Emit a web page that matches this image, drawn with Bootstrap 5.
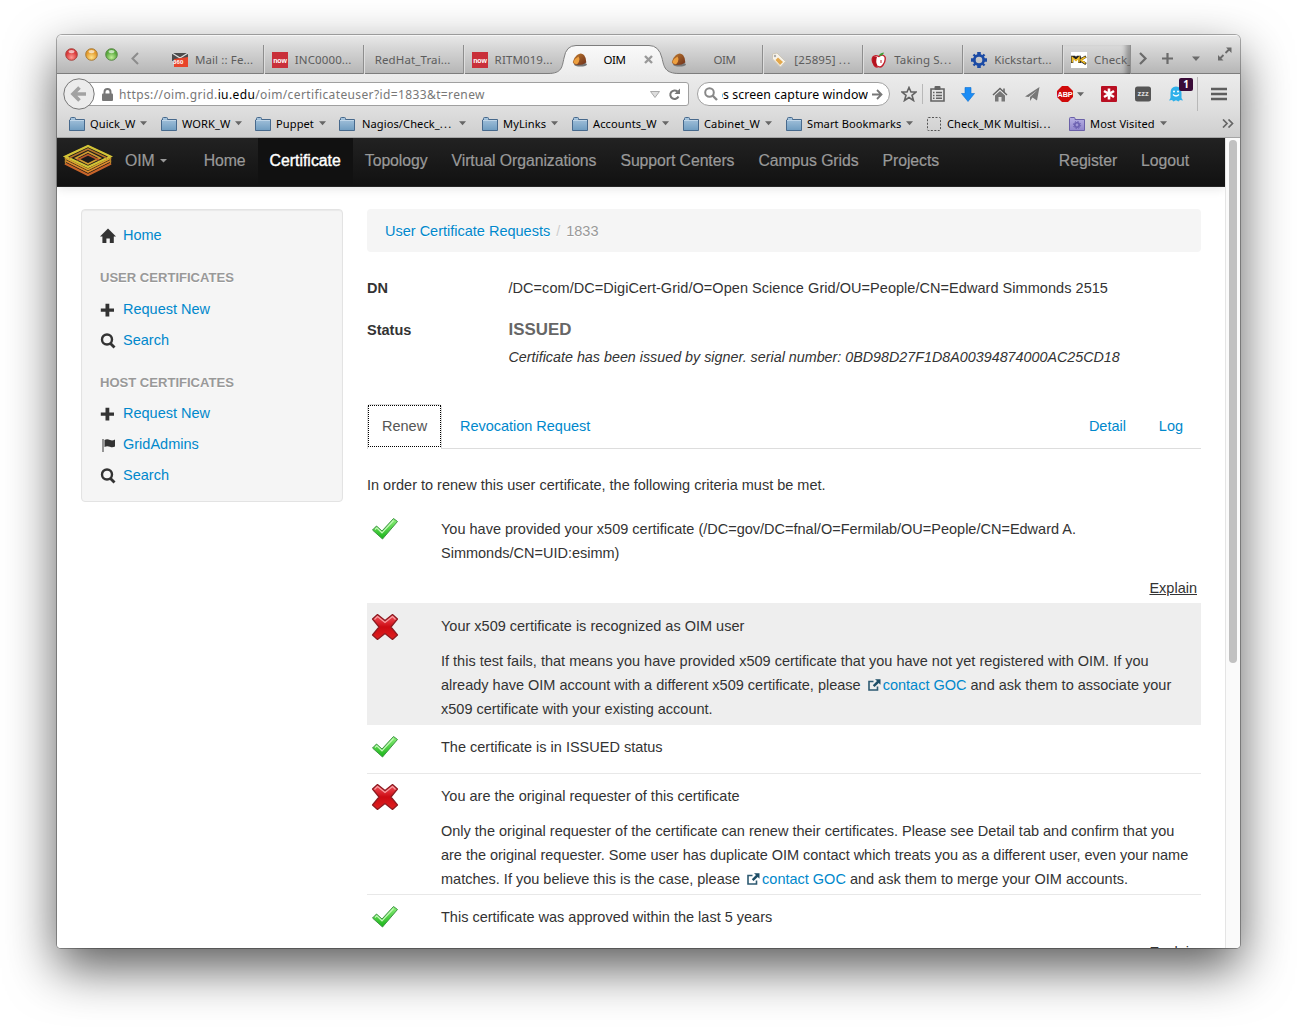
<!DOCTYPE html>
<html lang="en">
<head>
<meta charset="utf-8">
<title>OIM</title>
<link href="https://cdn.jsdelivr.net/npm/bootstrap@5.3.0/dist/css/bootstrap.min.css" rel="stylesheet">
<script src="https://cdn.jsdelivr.net/npm/bootstrap@5.3.0/dist/js/bootstrap.bundle.min.js"></script>
<style>
html,body{height:1027px;overflow:hidden;background:#fff}
body{font-family:"Liberation Sans",Arial,sans-serif;font-size:14.5px;line-height:24px;color:#333}
a{text-decoration:none;color:#08c}
svg{display:block;flex:none}
.win{width:1183px;height:913px;margin:35px 0 0 57px;border-radius:5px 5px 4px 4px;background:#fff;box-shadow:0 0 0 1px rgba(0,0,0,.3),0 20px 50px rgba(0,0,0,.65)}
.win-in{border-radius:5px 5px 4px 4px}

/* browser chrome */
.chrome{font-family:"Noto Sans","Open Sans",sans-serif;line-height:16px;color:#000}
.el{letter-spacing:1.2px}
.tabbar{height:39px;background:linear-gradient(#e9e9e9,#d6d6d6 35%,#b6b6b6);border-bottom:1px solid #7d7d7d;box-shadow:inset 0 1px #f6f6f6;font-size:11.5px;letter-spacing:.12px}
.lights{width:107px;padding:13px 0 0 8px;gap:7px}
.ftab{width:100px;height:29px;margin-top:10px;padding:0 0 0 8px;gap:7px;color:#5c5c5c;border-right:1px solid #8e8e8e;box-shadow:1px 0 #dedede}
.ftab.plain{padding-left:11px}
.ftab.noline{border-color:transparent;box-shadow:none}
.ftab.cur{color:#000;padding-left:8px}
.ftab.tight{width:68px;border-color:#8e8e8e;box-shadow:inset -7px 0 5px -3px rgba(0,0,0,.3)}
.oimname{width:60px;letter-spacing:-.5px}
.cur .oimname{width:42px;padding-left:9px}
.active-shape{left:491px;top:10px}
.toolbar{height:36px;background:linear-gradient(#ececec,#dedede)}
.back{width:32px;height:32px;margin-left:6px;z-index:1}
.urlbox{width:610px;height:24px;margin-left:-16px;padding:0 7px 0 22px;background:#fff;border:1px solid #a0a0a0;border-radius:0 3px 3px 0;font-size:12px;letter-spacing:.38px;color:#777}
.urlbox span{margin-left:6px;margin-top:1px}
.urlbox b{font-weight:400;color:#000}
.searchbox{width:193px;height:24px;margin-left:8px;padding:0 6px;border:1px solid #a0a0a0;border-radius:12px;background:#fff;font-size:12.3px;letter-spacing:.1px}
.searchbox span{width:146px;direction:rtl;height:15px}
.tools{display:grid;grid-template-columns:26px 1px 28px 34px 30px 35px 41px 36px 32px 34px 5px 42px;margin-left:6px;justify-items:center;align-items:center;height:36px}
.vline{width:1px;height:20px;background:#b8b8b8}
.vline.tall{height:34px;justify-self:end}
.count{left:10px;top:-8px;width:14px;height:13px;background:#3a0b38;color:#fff;border-radius:2px;font-weight:700;font-size:10px;line-height:13px;text-align:center}
.bmarks{height:28px;background:linear-gradient(#dedede,#cecece);border-bottom:1px solid #a5a5a5;display:grid;grid-template-columns:92px 94px 84px 143px 90px 111px 103px 140px 143px 153px auto;padding-left:12px;font-size:11.1px;letter-spacing:.08px;align-items:center}
.bmarks>div{display:flex;align-items:center;white-space:nowrap;gap:5px}
.bmarks .nag{gap:7px}

/* page */
.page-area{height:810px}
.topnav{height:49px;background:linear-gradient(#222,#111);border-bottom:1px solid #252525;box-shadow:0 1px 10px rgba(0,0,0,.12);font-size:15.8px}
.topnav a{color:#999;height:48px;line-height:45px;padding:0 12px;white-space:nowrap;letter-spacing:-.07px;-webkit-text-stroke:.2px #999}
.topnav a.on{color:#fff;background:#111;letter-spacing:.02px;-webkit-text-stroke:.4px #fff}
.topnav .nav-home{margin-left:11px}
.sidewell{width:262px;height:293px;margin:22px 0 0 24px;padding:9px 18px;background:#f5f5f5;border:1px solid #e3e3e3;border-radius:4px;box-shadow:inset 0 1px 1px rgba(0,0,0,.05)}
.sidewell a{display:flex;align-items:center;height:31px;gap:7px}
.sidewell a svg{margin-top:2px}
.sidewell h6{font-size:13.05px;line-height:24px;font-weight:700;color:#999;text-shadow:0 1px 0 #fff;margin:0;padding:15.5px 0 3px;height:43px}
.sidewell h6.host{height:42px}
.mainc{width:834px;margin:22px 0 0 24px}
.crumbs{height:43px;background:#f5f5f5;border-radius:4px;padding:0 18px;text-shadow:0 1px 0 #fff}
.crumbs .cs{padding:0 6px;color:#ccc}
.crumbs .cn{color:#999}
.lab{width:141.5px;font-weight:700}
.dn{letter-spacing:.045px}
.status-row{margin-top:14px}
.issued{font-size:16.9px;font-weight:700;color:#666}
.stat-note{font-size:14.32px;padding-top:3px}
.tabs2{height:45px;margin-top:35px;border-bottom:1px solid #ddd}
.tabs2 a{line-height:44px;letter-spacing:-.02px}
.tabs2 .tab-cur{width:75px;height:45px;background:#fff;border:1px solid #ddd;border-bottom:0;border-radius:4px 4px 0 0;color:#555}
.tab-cur span{width:73px;height:42px;border:1px dotted #000;padding-left:13px;line-height:40px}
.tab-rev{padding-left:18px}
.tab-det{margin-right:33px}
.tab-log{margin-right:18px}
.intro{margin:24px 0 9px}
.crit{height:121px;padding-top:10px}
.crit.first{height:97px;padding-top:11px}
.crit.brief{height:49px}
.crit.shade{height:122px;padding-top:11px}
.crit p{margin:0 0 11px}
.crit .ic{width:74px;padding-left:4px}
.crit .ic .bad{margin-top:-1px}
.crit .tx{width:760px}
.explain{color:#333;text-decoration:underline;margin-right:4px}
.shade{background:#eee}
.rule{border-bottom:1px solid #e8e8e8}
.tx .l2{letter-spacing:-.025px}
.track{width:15px;background:#fafafa;border-left:1px solid #e4e4e4;padding:2px 0 0 3px}
.thumb{width:8px;height:523px;border-radius:4px;background:#c1c1c1}
.ext{display:inline-block;margin:0 2px 0 3px;vertical-align:-1px}
</style>
</head>
<body>
<svg width="0" height="0" class="position-absolute">
<defs>
<linearGradient id="gf" x2="0" y2="1"><stop stop-color="#a9c6de"/><stop offset="1" stop-color="#6f9cc0"/></linearGradient>
<linearGradient id="gp" x2="0" y2="1"><stop stop-color="#b9b2e4"/><stop offset="1" stop-color="#8f84cc"/></linearGradient>
<linearGradient id="gc" x2="0" y2="1"><stop stop-color="#8df07a"/><stop offset="1" stop-color="#17b417"/></linearGradient>
<linearGradient id="gx" x2="0" y2="1"><stop stop-color="#f4555f"/><stop offset=".5" stop-color="#cc0a12"/><stop offset="1" stop-color="#e02020"/></linearGradient>
<linearGradient id="gd" x2="1" y2="1"><stop stop-color="#c07c30"/><stop offset="1" stop-color="#6e2f1a"/></linearGradient>
<linearGradient id="gt" x2="0" y2="1"><stop stop-color="#fafafa"/><stop offset="1" stop-color="#ececec"/></linearGradient>
<radialGradient id="lr" cy=".75"><stop stop-color="#ff9a92"/><stop offset="1" stop-color="#d8383a"/></radialGradient>
<radialGradient id="ly" cy=".75"><stop stop-color="#ffe28a"/><stop offset="1" stop-color="#e39a2c"/></radialGradient>
<radialGradient id="lg" cy=".75"><stop stop-color="#c2ee98"/><stop offset="1" stop-color="#58a83c"/></radialGradient>
<symbol id="folder" viewBox="0 0 16 14"><path d="M1.500 3V1.500q0-1 1-1h3q1 0 1 1V2.500H15.500V13.500H.500V3z" fill="url(#gf)" stroke="#47698c"/><path d="M1 3.500H15" stroke="#c0d6e8"/></symbol>
<symbol id="crt" viewBox="0 0 8 5"><path d="M0 0H8L4 4.500z" fill="#666"/></symbol>
<symbol id="rock" viewBox="0 0 16 15"><ellipse cx="8.500" cy="12.500" rx="6.500" ry="2" fill="#777"/><path d="M.8 10Q1.500 6 5 3Q9 0 12 3Q14.500 6 14.300 10.500Q10 13.500 5.500 13Q1.500 12.500 .8 10z" fill="url(#gd)"/><path d="M1.300 10Q2.500 6.500 6.500 4.500Q8 6.500 7 9.500Q6 12 4.500 12.200Q2 12 1.300 10z" fill="#eda040"/></symbol>
<symbol id="plus" viewBox="0 0 16 16"><path d="M.8 6.500H5.500V1.800H9.300V6.500H14V9.800H9.300V14.500H5.500V9.800H.8z" fill="#333"/></symbol>
<symbol id="mag" viewBox="0 0 16 16"><circle cx="7" cy="6.500" r="5" fill="none" stroke="#333" stroke-width="2.400"/><path d="M10.500 10.500L14.500 14.500" stroke="#333" stroke-width="2.800"/></symbol>
<symbol id="ok" viewBox="0 0 28 24"><path d="M1.500 13L5.500 9L11 14L22.500 1.500L26.500 4.500L11.500 22z" fill="url(#gc)" stroke="#3f9444" stroke-width="1" stroke-linejoin="round"/><path d="M4 12.500L5.800 10.800L11 15.800L22.500 3.500" fill="none" stroke="#c4f8b8" stroke-width="1.200"/></symbol>
<symbol id="no" viewBox="0 0 28 28"><path d="M1.500 6L6.500 1.500L14 7.500L21.500 1.500L26.500 6L20 14L26.500 22L21.500 26.500L14 20.500L6.500 26.500L1.500 22L8 14z" fill="url(#gx)" stroke="#8b1a20" stroke-width="1.200" stroke-linejoin="round"/><path d="M3.500 6.500L6.500 3.500L14 9.500L21.500 3.500L24.500 6.500" fill="none" stroke="#f7a0a4" stroke-width="1.100"/></symbol>
<symbol id="ext" viewBox="0 0 13 12"><path d="M5.500 2.500H1V11H9.500V7.500" fill="none" stroke="#2d5a72" stroke-width="1.600"/><path d="M7 .2H12.500V5.700L10.700 3.900L6.500 8L4.800 6.300L9 2.100z" fill="#1d4d66"/></symbol>
<symbol id="now" viewBox="0 0 16 16"><path d="M0 0H16V16H0z" fill="#c9303a"/><text x="8" y="10.500" text-anchor="middle" font-family="Liberation Sans" font-weight="700" font-size="7" letter-spacing="-.2" fill="#fff">now</text></symbol>
</defs>
</svg>

<div class="win"><div class="win-in overflow-hidden h-100">
<div class="chrome">
  <div class="tabbar d-flex position-relative text-nowrap">
    <svg class="active-shape position-absolute" width="132" height="30" viewBox="0 0 132 30"><path d="M0 28.500C14 28.500 14 22 16 13Q18 .5 28 .5H101Q111 .5 114 13C116 22 117 28.500 131 28.500V30H0z" fill="url(#gt)"/><path d="M0 28.500C14 28.500 14 22 16 13Q18 .5 28 .5H101Q111 .5 114 13C116 22 117 28.500 131 28.500" fill="none" stroke="#7d7d7d"/></svg>
    <div class="lights d-flex">
      <svg width="13" height="13"><circle cx="6.500" cy="6.500" r="5.800" fill="url(#lr)" stroke="#a8443f"/><ellipse cx="6.500" cy="3.600" rx="3" ry="1.700" fill="#fff" opacity=".65"/></svg>
      <svg width="13" height="13"><circle cx="6.500" cy="6.500" r="5.800" fill="url(#ly)" stroke="#a87a35"/><ellipse cx="6.500" cy="3.600" rx="3" ry="1.700" fill="#fff" opacity=".65"/></svg>
      <svg width="13" height="13"><circle cx="6.500" cy="6.500" r="5.800" fill="url(#lg)" stroke="#5a8848"/><ellipse cx="6.500" cy="3.600" rx="3" ry="1.700" fill="#fff" opacity=".65"/></svg>
      <svg class="ms-1 mt-1" width="12" height="14"><path d="M9 1L3.500 6.500L9 12" fill="none" stroke="#8c8c8c" stroke-width="2"/></svg>
    </div>
    <div class="ftab d-flex align-items-center"><svg width="16" height="16"><path d="M0 1H16V9H0z" fill="#4d4d4d"/><path d="M0 1L8 6L16 1" fill="none" stroke="#ddd" stroke-width="1.300"/><path d="M2 7L16 5V15H2z" fill="#e8452c"/><text x="1" y="11.500" font-family="Liberation Sans" font-weight="700" font-size="6" fill="#fff">360</text></svg><span>Mail :: Fe...</span></div>
    <div class="ftab d-flex align-items-center"><svg width="16" height="16"><use href="#now"/></svg><span>INC0000...</span></div>
    <div class="ftab plain d-flex align-items-center"><span>RedHat_Trai...</span></div>
    <div class="ftab noline d-flex align-items-center"><svg width="16" height="16"><use href="#now"/></svg><span>RITM019...</span></div>
    <div class="ftab noline cur position-relative d-flex align-items-center"><svg width="16" height="15"><use href="#rock"/></svg><span class="oimname">OIM</span><svg width="9" height="9"><path d="M1 1L8 8M8 1L1 8" stroke="#999" stroke-width="2.400"/></svg></div>
    <div class="ftab d-flex align-items-center"><svg width="16" height="15"><use href="#rock"/></svg><span class="oimname text-center">OIM</span></div>
    <div class="ftab d-flex align-items-center"><svg width="16" height="16"><path d="M1.500 2L6 1L14.500 9.500L9.500 15L1.500 7z" fill="#f7f3ea" stroke="#cfc8b8"/><path d="M7 5.500L12 10L9 13L4.500 8z" fill="#e3a84c"/><circle cx="4" cy="4" r="1.200" fill="#aaa"/></svg><span>[25895] <span class="el">...</span></span></div>
    <div class="ftab d-flex align-items-center"><svg width="16" height="16"><path d="M8 4.500Q12 1.500 14 5Q15 9 12 13Q10 16 7.500 14.500Q5 16 3 13Q0 8 2 5Q4 2.500 8 4.500z" fill="#fff" stroke="#c3202c" stroke-width="1.400"/><path d="M1.500 6Q3 3 6 5Q4 10 7 14.500Q3 15 1.500 10z" fill="#b5121e"/><path d="M8 4Q8 1 13 .5Q12 4 8 4z" fill="#3c9c34"/><path d="M10 8V11" stroke="#c3202c"/></svg><span>Taking S<span class="el">...</span></span></div>
    <div class="ftab d-flex align-items-center"><svg width="16" height="16" fill="none" stroke="#1c4ba5"><circle cx="8" cy="8" r="4.700" stroke-width="2.800"/><path d="M8 0V4M8 12V16M0 8H4M12 8H16" stroke-width="3.600"/><path d="M2.500 2.500L4.500 4.500M13.500 2.500L11.500 4.500M2.500 13.500L4.500 11.500M13.500 13.500L11.500 11.500" stroke-width="2.400"/></svg><span>Kickstart...</span></div>
    <div class="ftab tight overflow-hidden d-flex align-items-center"><svg width="16" height="16"><path d="M0 0H16V16H0z" fill="#fff"/><path d="M1 11V5H3.500L5 7L6.500 5H8.500V11M9 8L15 4.500M9 8L15 12M9 5.500V10.500" fill="none" stroke="#222" stroke-width="2.600"/><path d="M1.300 10.500V5.500L5 8.500L8 5.500V10.500M9.500 8L14.500 5M9.500 8L14.500 11.300" fill="none" stroke="#f2bc22" stroke-width="1.500"/></svg><span>Check_</span></div>
    <div class="d-flex align-items-center flex-grow-1 pt-2">
      <svg width="109" height="30" viewBox="0 0 109 30" fill="none" stroke="#6b6b6b"><path d="M9 10L14.500 15.500L9 21" stroke-width="2.200"/><path d="M31 15.500H42M36.500 10V21" stroke-width="2.200"/><path d="M61 13.500H69L65 18z" fill="#6b6b6b" stroke="none"/><path d="M94.500 10L98.500 6M92.500 12L88.500 16" stroke-width="1.800"/><path d="M95 4.500H100.500V10zM87 12V17.500H92.500z" fill="#6b6b6b" stroke="none"/></svg>
    </div>
  </div>

  <div class="toolbar d-flex align-items-center">
    <svg class="back position-relative mt-1" viewBox="0 0 32 32"><circle cx="16" cy="16" r="15.200" fill="#ececec" stroke="#777"/><path d="M23 16H11M16.500 9.500L10 16L16.500 22.500" fill="none" stroke="#a2a2a2" stroke-width="3.600"/></svg>
    <div class="urlbox d-flex align-items-center mt-1 text-nowrap">
      <svg width="11" height="13"><path d="M2.500 6V4Q2.500 1 5.500 1Q8.500 1 8.500 4V6" fill="none" stroke="#777" stroke-width="2"/><rect y="5.500" width="11" height="7.500" rx="1" fill="#777"/></svg>
      <span>https://oim.grid.<b>iu.edu</b>/oim/certificateuser?id=1833&amp;t=renew</span>
      <svg class="ms-auto" width="10" height="7"><path d="M.5 .5H9.500L5 6.500z" fill="#ddd" stroke="#aaa"/></svg>
      <svg class="ms-2" width="13" height="13"><path d="M10.500 8.500A4.300 4.300 0 1 1 9.500 3.500" fill="none" stroke="#777" stroke-width="2"/><path d="M12 .5V6H6.500z" fill="#777"/></svg>
    </div>
    <div class="searchbox d-flex align-items-center mt-1 text-nowrap">
      <svg width="14" height="14"><circle cx="5.500" cy="5.500" r="4.300" fill="none" stroke="#888" stroke-width="2"/><path d="M8.500 8.500L13 13" stroke="#888" stroke-width="2.400"/></svg>
      <span class="overflow-hidden ms-1 ps-1">os screen capture window</span>
      <svg class="ms-1" width="11" height="11"><path d="M0 5.500H9M5 1L9.500 5.500L5 10" fill="none" stroke="#777" stroke-width="1.800"/></svg>
    </div>
    <div class="tools mt-1">
      <svg width="16" height="16"><path d="M8 1.500L10 6H15L11 9.300L12.500 14.500L8 11.500L3.500 14.500L5 9.300L1 6H6z" fill="none" stroke="#636363" stroke-width="1.600"/></svg>
      <div class="vline"></div>
      <svg width="15" height="16"><path d="M1 3H14V15H1z" fill="none" stroke="#636363" stroke-width="1.600"/><rect x="4.500" width="6" height="4" rx="1" fill="#636363"/><path d="M3 6.500H4.500M6 6.500H12M3 9.500H4.500M6 9.500H12M3 12.300H4.500M6 12.300H12" stroke="#636363" stroke-width="1.400"/></svg>
      <svg width="14" height="15"><path d="M4 .5H10V6.500H13.500L7 14.500L.5 6.500H4z" fill="#1a8cf5" stroke="#0c6fd0" stroke-width=".6"/></svg>
      <svg width="16" height="15"><path d="M1 8L8 1.500L15 8" fill="none" stroke="#636363" stroke-width="1.500"/><path d="M3 8.500L8 4L13 8.500V14.500H9.500V10H6.500V14.500H3z" fill="#777"/><path d="M12 1.500V5" stroke="#636363" stroke-width="1.500"/></svg>
      <svg width="15" height="15"><path d="M0 9.500L14.500 0L12 13.500L7.500 10.500L5 14V10L12.500 3L3.500 10z" fill="#777"/></svg>
      <div class="d-flex align-items-center gap-1"><svg width="16" height="16"><path d="M5 0H11L16 5V11L11 16H5L0 11V5z" fill="#d00a0a"/><text x="8" y="10.700" text-anchor="middle" font-family="Liberation Sans" font-weight="700" font-size="7.300" letter-spacing="-.2" fill="#fff">ABP</text></svg><svg width="7" height="5"><use href="#crt"/></svg></div>
      <svg width="16" height="16"><rect width="16" height="16" rx="1" fill="#b90f22"/><path d="M8 2.500V13.500M3 5L13 11M13 5L3 11" stroke="#fff" stroke-width="2.600"/></svg>
      <svg width="16" height="16"><rect y=".5" width="16" height="15" rx="2.500" fill="#555"/><text x="8" y="10" text-anchor="middle" font-family="Liberation Sans" font-weight="700" font-size="7.500" fill="#ddd">zzz</text></svg>
      <div class="position-relative"><svg width="14" height="16"><path d="M1.500 7Q1.500 .5 7 .5Q12.500 .5 12.500 7V12L14 14.500L11 14L9.500 15.500L7 14.300L4.500 15.500L3 14L0 14.500L1.500 12z" fill="#2fb1ea"/><circle cx="5" cy="5.500" r="1" fill="#fff"/><circle cx="9" cy="5.500" r="1" fill="#fff"/><path d="M4 8.500Q7 11.500 10 8.500" fill="none" stroke="#fff" stroke-width="1.200"/></svg><div class="count position-absolute">1</div></div>
      <div class="vline tall"></div>
      <svg width="16" height="14"><path d="M0 2H16M0 7H16M0 12H16" stroke="#5e5e5e" stroke-width="2.400"/></svg>
    </div>
  </div>

  <div class="bmarks">
    <div><svg width="16" height="14"><use href="#folder"/></svg>Quick_W<svg width="7" height="5"><use href="#crt"/></svg></div>
    <div><svg width="16" height="14"><use href="#folder"/></svg>WORK_W<svg width="7" height="5"><use href="#crt"/></svg></div>
    <div><svg width="16" height="14"><use href="#folder"/></svg>Puppet<svg width="7" height="5"><use href="#crt"/></svg></div>
    <div class="nag"><svg width="16" height="14"><use href="#folder"/></svg><span>Nagios/Check_<span class="el">...</span></span><svg width="7" height="5"><use href="#crt"/></svg></div>
    <div><svg width="16" height="14"><use href="#folder"/></svg>MyLinks<svg width="7" height="5"><use href="#crt"/></svg></div>
    <div><svg width="16" height="14"><use href="#folder"/></svg>Accounts_W<svg width="7" height="5"><use href="#crt"/></svg></div>
    <div><svg width="16" height="14"><use href="#folder"/></svg>Cabinet_W<svg width="7" height="5"><use href="#crt"/></svg></div>
    <div><svg width="16" height="14"><use href="#folder"/></svg>Smart Bookmarks<svg width="7" height="5"><use href="#crt"/></svg></div>
    <div><svg width="16" height="14"><rect x="1.500" y=".5" width="13" height="13" rx="1" fill="none" stroke="#555" stroke-dasharray="2 1.500"/></svg><span>Check_MK Multisi<span class="el">...</span></span></div>
    <div><svg width="16" height="14"><path d="M.5 3V1.500Q.5.5 1.500.5H5Q6 .5 6 1.500V2.500H15.500V13.500H.5z" fill="url(#gp)" stroke="#6a60a8"/><circle cx="8" cy="8" r="2.200" fill="none" stroke="#6a5fb0" stroke-width="1.600"/><circle cx="8" cy="8" r="3.600" fill="none" stroke="#6a5fb0" stroke-dasharray="1.400 1.430"/></svg>Most Visited<svg width="7" height="5"><use href="#crt"/></svg></div>
    <div><svg width="12" height="9"><path d="M1 .5L5 4.500L1 8.500M6.500 .5L10.500 4.500L6.500 8.500" fill="none" stroke="#666" stroke-width="1.700"/></svg></div>
  </div>
</div>

<div class="page-area d-flex">
  <div class="flex-grow-1 overflow-hidden bg-white">
    <nav class="topnav d-flex">
      <svg class="ms-1 mt-1" width="52" height="40" viewBox="0 0 52 40" fill="none" stroke-width="1.900"><path d="M4 21.500L27 33L50 21.500" stroke="#c8642a" stroke-width="2.300"/><path d="M4 18.500L27 30L50 18.500" stroke="#dd8a2e"/><path d="M4 16L27 27.500L50 16" stroke="#d9a02e"/><path d="M4.500 21.500V14.500L27 4L49.500 14.500V21.500" stroke="#b8862a" stroke-width="1.300"/><path d="M4.500 14.500L27 4L49.500 14.500L27 25z" stroke="#d2c336" stroke-width="2.300"/><path d="M8 16L27 7L46 16" stroke="#b5752a" stroke-width="1.600"/><path d="M15 16L27 10L39 16L27 22z" stroke="#cf9a30" stroke-width="1.800"/><path d="M16 18L27 12.700L38 18" stroke="#b8562a" stroke-width="1.500"/></svg>
      <a class="ps-2 d-flex" href="#"><span class="ps-1">OIM</span><svg class="ms-1 mt-3 pt-1" width="10" height="10"><path d="M1 1H8L4.500 4.500z" fill="#999"/></svg></a>
      <a class="nav-home" href="#">Home</a><a class="on" href="#">Certificate</a><a href="#">Topology</a><a href="#">Virtual Organizations</a><a href="#">Support Centers</a><a href="#">Campus Grids</a><a href="#">Projects</a>
      <a class="ms-auto" href="#">Register</a><a class="me-4" href="#">Logout</a>
    </nav>
    <div class="d-flex">
      <aside class="sidewell">
        <a href="#"><svg width="16" height="16"><path d="M8 .5L16 8.500H13.800V15H9.800V10.500H6.400V15H2.400V8.500H0z" fill="#333"/></svg>Home</a>
        <h6>USER CERTIFICATES</h6>
        <a href="#"><svg width="16" height="16"><use href="#plus"/></svg>Request New</a>
        <a href="#"><svg width="16" height="16"><use href="#mag"/></svg>Search</a>
        <h6 class="host">HOST CERTIFICATES</h6>
        <a href="#"><svg width="16" height="16"><use href="#plus"/></svg>Request New</a>
        <a href="#"><svg width="16" height="16"><path d="M3 2V15" stroke="#555" stroke-width="1.200"/><path d="M4.500 3Q7 1.500 10 3Q12.500 4 15 2.500V9.500Q12.500 11 10 9.800Q7 8.500 4.500 10z" fill="#333"/></svg>GridAdmins</a>
        <a href="#"><svg width="16" height="16"><use href="#mag"/></svg>Search</a>
      </aside>
      <main class="mainc">
        <div class="crumbs d-flex align-items-center"><a href="#">User Certificate Requests</a><span class="cs">/</span><span class="cn">1833</span></div>
        <div class="d-flex mt-4"><div class="lab">DN</div><div class="dn">/DC=com/DC=DigiCert-Grid/O=Open Science Grid/OU=People/CN=Edward Simmonds 2515</div></div>
        <div class="status-row d-flex"><div class="lab pt-1">Status</div><div><div class="issued pt-1">ISSUED</div><div class="stat-note fst-italic">Certificate has been issued by signer. serial number: 0BD98D27F1D8A00394874000AC25CD18</div></div></div>
        <div class="tabs2 d-flex">
          <div class="tab-cur"><span class="d-block">Renew</span></div>
          <a class="tab-rev me-auto" href="#">Revocation Request</a><a class="tab-det" href="#">Detail</a><a class="tab-log" href="#">Log</a>
        </div>
        <p class="intro">In order to renew this user certificate, the following criteria must be met.</p>
        <div class="crit first d-flex"><div class="ic"><svg width="28" height="24"><use href="#ok"/></svg></div><div class="tx"><p>You have provided your x509 certificate (/DC=gov/DC=fnal/O=Fermilab/OU=People/CN=Edward A.<br>Simmonds/CN=UID:esimm)</p><div class="text-end"><a class="explain" href="#">Explain</a></div></div></div>
        <div class="crit shade d-flex"><div class="ic"><svg class="bad" width="28" height="28"><use href="#no"/></svg></div><div class="tx"><p>Your x509 certificate is recognized as OIM user</p><p>If this test fails, that means you have provided x509 certificate that you have not yet registered with OIM. If you<br>already have OIM account with a different x509 certificate, please <a href="#"><svg class="ext" width="13" height="12"><use href="#ext"/></svg>contact GOC</a> and ask them to associate your<br>x509 certificate with your existing account.</p></div></div>
        <div class="crit brief rule d-flex"><div class="ic"><svg width="28" height="24"><use href="#ok"/></svg></div><div class="tx"><p>The certificate is in ISSUED status</p></div></div>
        <div class="crit rule d-flex"><div class="ic"><svg class="bad" width="28" height="28"><use href="#no"/></svg></div><div class="tx"><p>You are the original requester of this certificate</p><p>Only the original requester of the certificate can renew their certificates. Please see Detail tab and confirm that you<br><span class="l2">are the original requester. Some user has duplicate OIM contact which treats you as a different user, even your name</span><br>matches. If you believe this is the case, please <a href="#"><svg class="ext" width="13" height="12"><use href="#ext"/></svg>contact GOC</a> and ask them to merge your OIM accounts.</p></div></div>
        <div class="crit d-flex"><div class="ic"><svg width="28" height="24"><use href="#ok"/></svg></div><div class="tx"><p>This certificate was approved within the last 5 years</p><div class="text-end"><a class="explain" href="#">Explain</a></div></div></div>
      </main>
    </div>
  </div>
  <div class="track"><div class="thumb"></div></div>
</div>
</div></div>
</body>
</html>
